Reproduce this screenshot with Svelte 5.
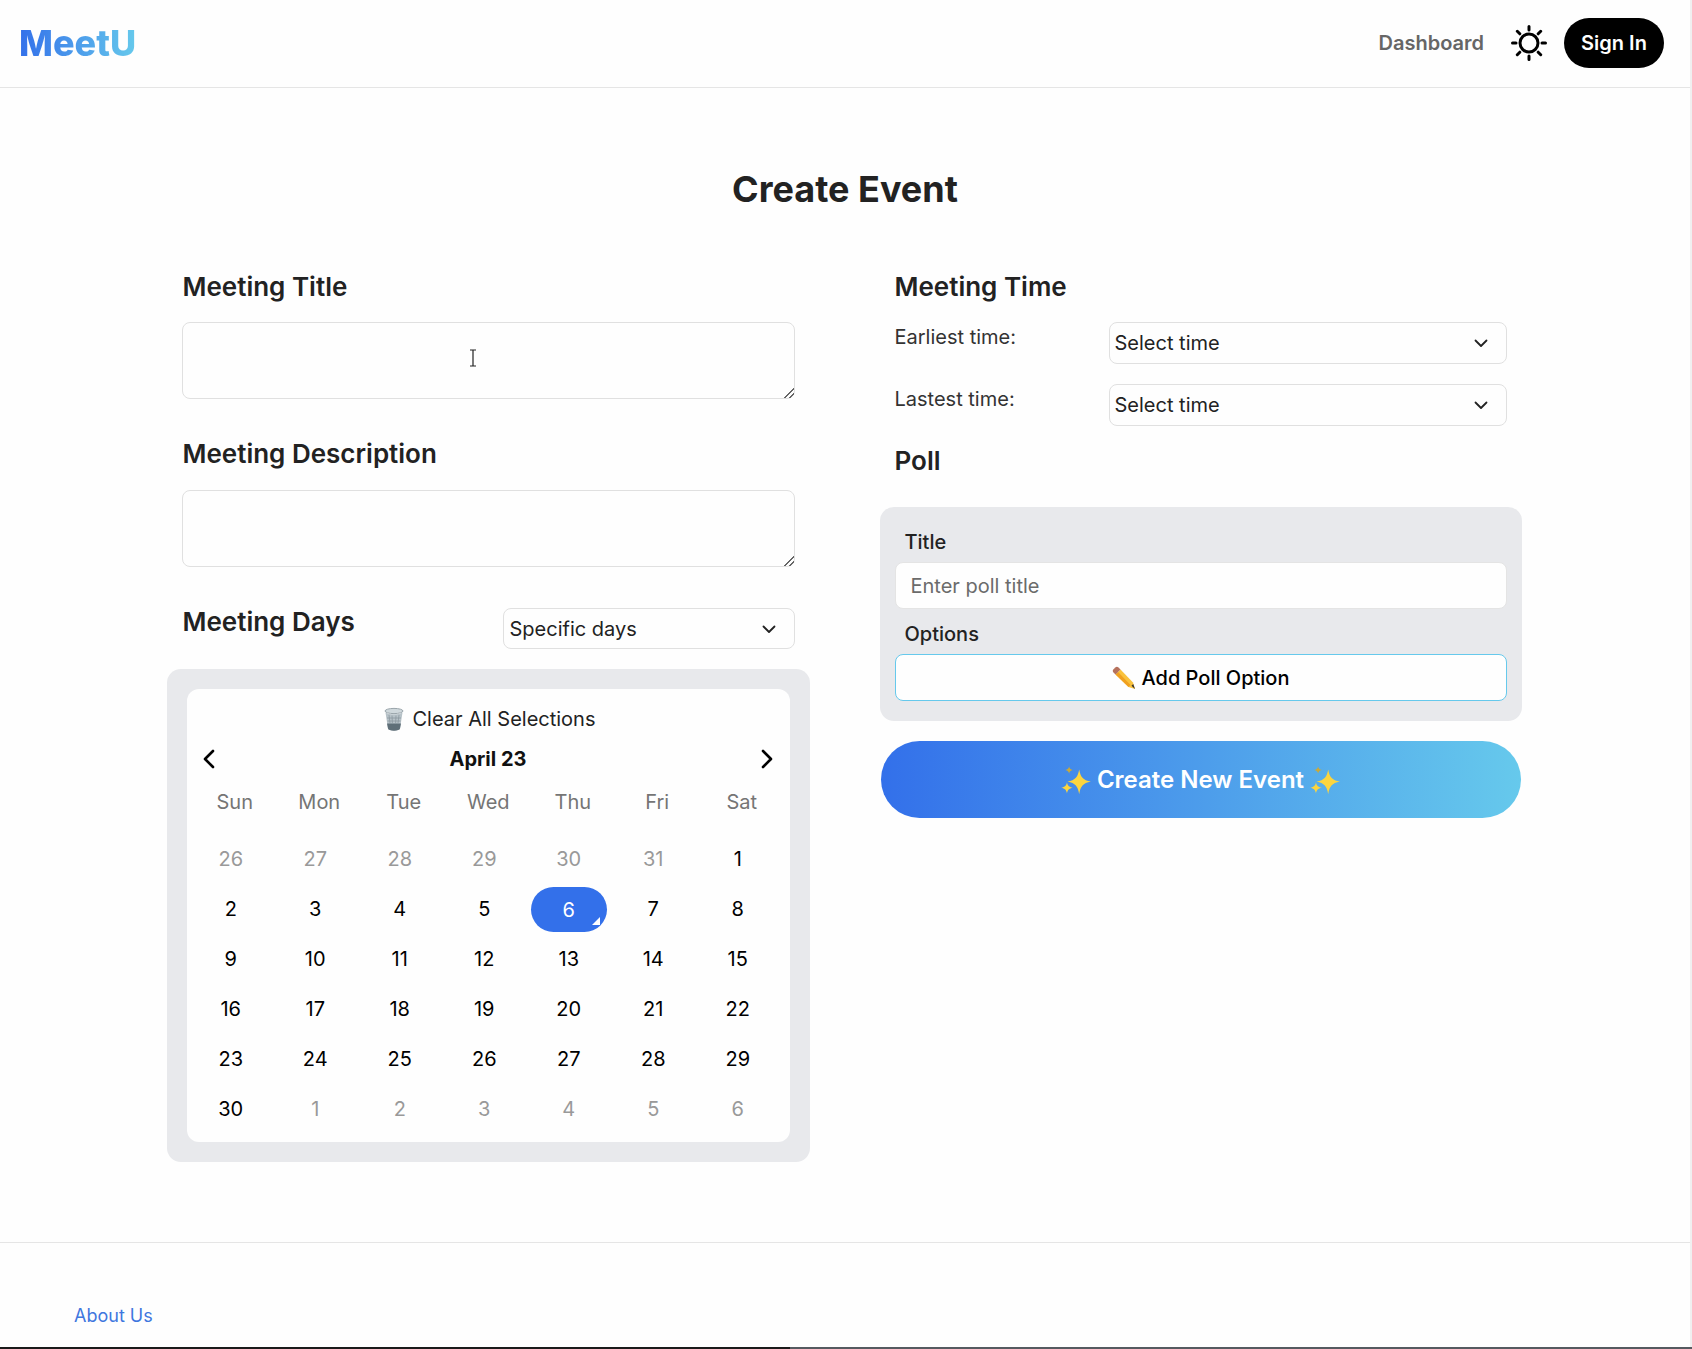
<script>
	const weekdays = ['Sun', 'Mon', 'Tue', 'Wed', 'Thu', 'Fri', 'Sat'];

	// April 2023 with the spill-over days of March and May
	const days = [
		...[26, 27, 28, 29, 30, 31].map((d) => ({ d, muted: true })),
		...Array.from({ length: 30 }, (_, i) => ({ d: i + 1, muted: false })),
		...[1, 2, 3, 4, 5, 6].map((d) => ({ d, muted: true }))
	];
	const selected = 11;
</script>

{#snippet chevron()}
	<svg class="chevron" width="16" height="16" viewBox="0 0 16 16" fill="none" stroke="#222" stroke-width="1.800" stroke-linecap="round" stroke-linejoin="round">
		<path d="M2.500 5.500 8 11l5.500-5.500" />
	</svg>
{/snippet}

{#snippet sparkles()}
	<svg width="32" height="34" viewBox="0 0 30 32">
		<path d="M18 6c1.200 7 3.500 10 11 11.500-7.500 1.500-9.800 4.500-11 12-1.200-7.500-3.500-10.500-11-12 7.500-1.500 9.800-4.500 11-11.500z" fill="#fcd53f" />
		<path d="M6.500 18c.6 3.200 1.800 4.500 5.500 5.200-3.700.7-4.900 2-5.500 5.300-.6-3.300-1.800-4.600-5.500-5.300 3.700-.7 4.900-2 5.500-5.200z" fill="#fcd53f" />
		<path d="M8.500 3c.4 2.200 1.200 3 3.500 3.500-2.300.5-3.100 1.300-3.500 3.500-.4-2.200-1.200-3-3.500-3.500 2.300-.5 3.100-1.300 3.500-3.500z" fill="#c9a93a" />
	</svg>
{/snippet}

<div class="page">
	<div class="content">
		<header class="topbar">
			<span class="logo">MeetU</span>
			<nav class="nav">
				<span class="nav-link">Dashboard</span>
				<svg class="sun" width="36" height="36" viewBox="0 0 36 36" fill="none" stroke="#000" stroke-width="3" stroke-linecap="round">
					<circle cx="18" cy="18" r="9" />
					<path d="M18 1.500v3.500M18 31v3.500M1.500 18H5M31 18h3.500M6.300 6.300l2.500 2.500M27.200 27.200l2.500 2.500M6.300 29.700l2.500-2.500M27.200 8.800l2.500-2.500" />
				</svg>
				<button class="sign-in">Sign In</button>
			</nav>
		</header>

		<main class="main">
			<h1 class="page-title">Create Event</h1>

			<div class="columns">
				<section class="col">
					<div class="inset">
						<h2>Meeting Title</h2>
						<div class="area-wrap">
							<textarea class="area"></textarea>
							<svg class="ibeam" width="8" height="18" viewBox="0 0 8 18" fill="none" stroke="#222" stroke-width="1.200">
								<path d="M1 1h6M1 17h6M4 1v16" />
							</svg>
						</div>
						<h2 class="desc-title">Meeting Description</h2>
						<textarea class="area desc-area"></textarea>
						<div class="days-row">
							<h2>Meeting Days</h2>
							<div class="select-wrap days-select">
								<select>
									<option>Specific days</option>
								</select>
								{@render chevron()}
							</div>
						</div>
					</div>

					<div class="panel cal-panel">
						<div class="calendar">
							<div class="clear">
								<svg width="22" height="24" viewBox="0 0 22 24">
									<ellipse cx="11" cy="4" rx="9" ry="2.600" fill="#cfd8dc" stroke="#9aa5ab" stroke-width="1" />
									<path d="M2.500 5.500 5 21.500c.2 1.400 2.800 2.200 6 2.200s5.800-.8 6-2.200l2.500-16c-2 1.300-5 1.800-8.500 1.800s-6.500-.5-8.500-1.800z" fill="#b7c2c8" />
									<path d="M4 16.500 5 21.500c.2 1.400 2.800 2.200 6 2.200s5.800-.8 6-2.200l1-5z" fill="#5f6f78" />
									<path d="M6 8l1 8M9 8.500l.4 8M13 8.500l-.4 8M16 8l-1 8M4 11h14M4.500 14h13" stroke="#8b989f" stroke-width=".8" fill="none" />
								</svg>
								<span>Clear All Selections</span>
							</div>
							<div class="month-row">
								<svg width="14" height="20" viewBox="0 0 14 20" fill="none" stroke="#000" stroke-width="2.600" stroke-linecap="round" stroke-linejoin="round"><path d="M11 2 3 10l8 8" /></svg>
								<span class="month">April 23</span>
								<svg width="14" height="20" viewBox="0 0 14 20" fill="none" stroke="#000" stroke-width="2.600" stroke-linecap="round" stroke-linejoin="round"><path d="m3 2 8 8-8 8" /></svg>
							</div>
							<div class="weekdays">
								{#each weekdays as w}
									<span>{w}</span>
								{/each}
							</div>
							<div class="dates">
								{#each days as day, i}
									<span class="date" class:muted={day.muted} class:selected={i === selected}>
										{day.d}
										{#if i === selected}
											<i class="corner"></i>
										{/if}
									</span>
								{/each}
							</div>
						</div>
					</div>
				</section>

				<section class="col">
					<div class="inset-right">
						<h2>Meeting Time</h2>
						<div class="time-row">
							<label for="earliest">Earliest time:</label>
							<div class="select-wrap">
								<select id="earliest"><option>Select time</option></select>
								{@render chevron()}
							</div>
						</div>
						<div class="time-row">
							<label for="latest">Lastest time:</label>
							<div class="select-wrap">
								<select id="latest"><option>Select time</option></select>
								{@render chevron()}
							</div>
						</div>
						<h2 class="poll-title">Poll</h2>
					</div>

					<div class="panel poll-panel">
						<span class="poll-label">Title</span>
						<input class="poll-input" placeholder="Enter poll title" />
						<span class="poll-label options">Options</span>
						<button class="add-option">
							<svg width="24" height="24" viewBox="0 0 24 24">
								<path d="M3.500 8.500 8.500 3.500 21 16.500 23 23 16.500 21z" fill="#f9c23c" />
								<path d="M6 6 18.500 19 16.500 21 3.500 8.500z" fill="#f0a020" />
								<path d="M19.500 19.800 21.200 18 23 23z" fill="#33302c" />
								<path d="M1.500 6.500C.5 5.500.5 4.300 1.500 3.300l1.800-1.800C4.300.5 5.500.5 6.500 1.500l2 2-5 5z" fill="#b5715c" />
							</svg>
							<span>Add Poll Option</span>
						</button>
					</div>

					<button class="create">
						{@render sparkles()}
						<span>Create New Event</span>
						{@render sparkles()}
					</button>
				</section>
			</div>
		</main>

		<footer class="footer">
			<span class="about">About Us</span>
		</footer>
	</div>
	<div class="strip"></div>
</div>

<style>
	:global(body) {
		margin: 0;
		background: #fefefe;
		font-family: Inter, 'Liberation Sans', sans-serif;
		color: #222;
	}

	.page {
		height: 1349px;
		display: flex;
		flex-direction: column;
		overflow: hidden;
	}

	/* leaves the thin scrollbar track of the reference on the right */
	.content {
		flex: 1;
		display: flex;
		flex-direction: column;
		border-right: 2px solid #f0f0f0;
	}

	.topbar {
		height: 85px;
		flex: none;
		border-bottom: 1px solid #e5e5e5;
		display: flex;
		align-items: center;
		justify-content: space-between;
		padding: 0 26px 2px 19px;
	}

	.logo {
		font-size: 36px;
		font-weight: 800;
		background: linear-gradient(90deg, #3370ea, #66c9ec);
		-webkit-background-clip: text;
		background-clip: text;
		color: transparent;
	}

	.nav {
		display: flex;
		align-items: center;
	}

	.nav-link {
		font-size: 20px;
		font-weight: 600;
		color: #666;
		margin-right: 27px;
	}

	.sun {
		margin-right: 17px;
	}

	.sign-in {
		width: 100px;
		height: 50px;
		border: none;
		border-radius: 25px;
		background: #000;
		color: #fff;
		font: 600 20px Inter, sans-serif;
	}

	.main {
		flex: 1;
		display: flex;
		flex-direction: column;
		align-items: center;
	}

	.page-title {
		margin: 77px 0 0;
		height: 48px;
		line-height: 48px;
		font-size: 36px;
		font-weight: 700;
		color: #222;
	}

	.columns {
		width: 1355px;
		margin-left: -2px;
		margin-top: 58px;
		display: grid;
		grid-template-columns: 643px 642px;
		column-gap: 70px;
	}

	.inset {
		padding: 0 15px;
	}

	.inset-right {
		padding: 0 15px 0 14px;
	}

	h2 {
		margin: 0;
		padding-left: 1px;
		height: 32px;
		line-height: 32px;
		font-size: 26px;
		font-weight: 600;
		color: #222;
	}

	.area-wrap {
		position: relative;
	}

	.area {
		display: block;
		box-sizing: border-box;
		width: 100%;
		height: 77px;
		margin-top: 19px;
		border: 1px solid #e0e0e0;
		border-radius: 8px;
		background: #fefefe;
		outline: none;
	}

	.area::-webkit-resizer {
		background: linear-gradient(135deg, transparent 66%, #666 66%, #666 72%, transparent 72%, transparent 82%, #666 82%, #666 88%, transparent 88%);
	}

	.desc-area {
		margin-top: 20px;
	}

	.ibeam {
		position: absolute;
		left: 287px;
		top: 27px;
	}

	.desc-title {
		margin-top: 39px;
	}

	.days-row {
		display: flex;
		justify-content: space-between;
		align-items: flex-start;
		margin-top: 41px;
	}

	.days-row h2 {
		margin-top: -2px;
	}

	.select-wrap {
		position: relative;
		flex: 1;
	}

	.days-select {
		flex: none;
		width: 292px;
	}

	select {
		display: block;
		box-sizing: border-box;
		width: 100%;
		height: 42px;
		padding: 0 0 0 5px;
		border: 1px solid #e0e0e0;
		border-radius: 8px;
		background: #fefefe;
		color: #222;
		font: 400 20px Inter, sans-serif;
		appearance: none;
		outline: none;
	}

	.days-select select {
		height: 41px;
		padding-left: 6px;
	}

	.chevron {
		position: absolute;
		right: 18px;
		top: 13px;
		pointer-events: none;
	}

	.panel {
		background: #e8e9ec;
		border-radius: 14px;
		box-sizing: border-box;
	}

	.cal-panel {
		margin-top: 20px;
		padding: 20px;
		height: 493px;
	}

	.calendar {
		height: 100%;
		background: #fefefe;
		border-radius: 12px;
		box-sizing: border-box;
		padding: 17px 0 0;
	}

	.clear {
		display: flex;
		align-items: center;
		justify-content: center;
		gap: 8px;
		height: 26px;
		padding-left: 2px;
		font-size: 20px;
		color: #222;
	}

	.month-row {
		display: flex;
		align-items: center;
		justify-content: space-between;
		padding: 0 15px;
		margin-top: 14px;
		height: 26px;
	}

	.month {
		font-size: 20px;
		font-weight: 700;
		color: #111;
	}

	.weekdays {
		display: grid;
		grid-template-columns: repeat(7, 84.500px);
		margin: 17px 0 0 6px;
		height: 26px;
		line-height: 26px;
		font-size: 20px;
		color: #757575;
		text-align: center;
	}

	.dates {
		display: grid;
		grid-template-columns: repeat(7, 84.500px);
		grid-auto-rows: 50px;
		margin: 19px 0 0 2px;
		font-size: 20px;
		color: #000;
	}

	.date {
		display: flex;
		align-items: center;
		justify-content: center;
		position: relative;
	}

	.muted {
		color: #999;
	}

	.selected {
		color: #fff;
		background: #3370ea;
		border-radius: 23px;
		margin: 3px 4px 2px;
	}

	.corner {
		position: absolute;
		right: 7px;
		bottom: 7px;
		width: 0;
		height: 0;
		border-style: solid;
		border-width: 0 0 8px 8px;
		border-color: transparent transparent #fff transparent;
	}

	.time-row {
		display: flex;
		margin-bottom: 20px;
	}

	h2 + .time-row {
		margin-top: 19px;
	}

	.time-row label {
		width: 214px;
		padding-left: 1px;
		font-size: 20px;
		line-height: 30px;
		color: #333;
	}

	.poll-title {
		margin-top: -1px;
	}

	.poll-panel {
		margin-top: 30px;
		height: 214px;
		padding: 20px 15px;
		display: flex;
		flex-direction: column;
		align-items: stretch;
	}

	.poll-label {
		font-size: 20px;
		font-weight: 500;
		line-height: 30px;
		color: #222;
		padding-left: 10px;
	}

	.options {
		margin-top: 10px;
	}

	.poll-input {
		box-sizing: border-box;
		height: 47px;
		flex: none;
		margin-top: 5px;
		padding: 0 15px;
		border: 1px solid #e4e4e4;
		border-radius: 8px;
		background: #fefefe;
		font: 400 20px Inter, sans-serif;
		outline: none;
	}

	.poll-input::placeholder {
		color: #6b6b6b;
	}

	.add-option {
		height: 47px;
		margin-top: 5px;
		flex: none;
		display: flex;
		align-items: center;
		justify-content: center;
		gap: 6px;
		border: 1px solid #66c9ec;
		border-radius: 8px;
		background: #fefefe;
		color: #000;
		font: 500 20px Inter, sans-serif;
	}

	.create {
		width: 640px;
		height: 77px;
		margin: 20px 0 0 1px;
		display: flex;
		align-items: center;
		justify-content: center;
		gap: 5px;
		border: none;
		border-radius: 39px;
		background: linear-gradient(90deg, #3370ea, #66c9ec);
		color: #fff;
		font: 600 24px Inter, sans-serif;
	}

	.footer {
		flex: none;
		height: 105px;
		border-top: 1px solid #e5e5e5;
		box-sizing: border-box;
		padding: 60px 0 0 74px;
	}

	.about {
		font-size: 18px;
		line-height: 26px;
		color: #3f77de;
	}

	.strip {
		flex: none;
		height: 2px;
		background: linear-gradient(90deg, #1a1a1a 790px, #555a60 790px);
	}
</style>
